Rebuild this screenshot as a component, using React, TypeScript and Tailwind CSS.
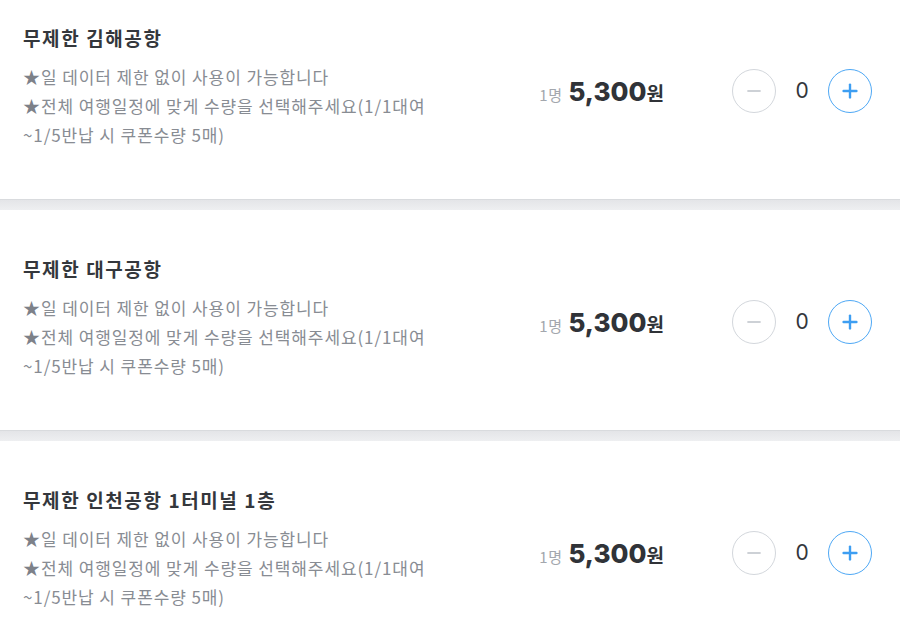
import { Minus, Plus } from "lucide-react";

const items = [
  { name: "무제한 김해공항" },
  { name: "무제한 대구공항" },
  { name: "무제한 인천공항 1터미널 1층" },
];

function Stepper() {
  return (
    <div className="flex items-center">
      <button className="flex h-[44px] w-[44px] items-center justify-center rounded-full border border-[#d3d7dc] bg-white">
        <Minus className="h-[20px] w-[20px] text-[#cdd1d6]" strokeWidth={2.6} />
      </button>
      <span className="w-[52px] text-center text-[21px] text-[#33363b]" style={{ fontFamily: "Inter, sans-serif" }}>
        0
      </span>
      <button className="flex h-[44px] w-[44px] items-center justify-center rounded-full border border-[#4ea8f5] bg-white">
        <Plus className="h-[22px] w-[22px] text-[#3d9ef2]" strokeWidth={2.6} />
      </button>
    </div>
  );
}

function Ticket({ name, first }: { name: string; first?: boolean }) {
  return (
    <section
      className={`flex items-start bg-white pl-[23px] pr-[28px] ${
        first ? "h-[199px] pt-[25px]" : "h-[220px] pt-[46px]"
      }`}
    >
      <div className="flex-1">
        <h3 className="text-[19px] font-semibold leading-[26px] tracking-[1.6px] text-[#34373c]">{name}</h3>
        <p className="mt-[11px] text-[17px] leading-[29px] tracking-[0.9px] text-[#888c93]">
          <span className="text-[#7d8189]">★</span>일 데이터 제한 없이 사용이 가능합니다
          <br />
          <span className="text-[#7d8189]">★</span>전체 여행일정에 맞게 수량을 선택해주세요(1/1대여
          <br />
          ~1/5반납 시 쿠폰수량 5매)
        </p>
      </div>
      <div className="mt-[44px] flex items-center">
        <div className="mr-[68px] flex items-baseline text-[#303338]">
          <span className="mr-[6px] text-[15px] tracking-[0.5px] text-[#a3a7ad]">1명</span>
          <span className="text-[26px] font-extrabold" style={{ fontFamily: "Inter, sans-serif" }}>
            5,300
          </span>
          <span className="text-[19px] font-semibold">원</span>
        </div>
        <Stepper />
      </div>
    </section>
  );
}

export default function App() {
  return (
    <div
      className="h-[644px] w-[900px] overflow-hidden bg-white"
      style={{ fontFamily: '"Noto Sans CJK KR", "Noto Sans", sans-serif' }}
    >
      {items.map((item, i) => (
        <div key={i}>
          {i > 0 && (
            <div className="h-[11px] border-t border-[#d9dbde] bg-gradient-to-b from-[#e4e5e8] to-[#eeeff1]" />
          )}
          <Ticket name={item.name} first={i === 0} />
        </div>
      ))}
    </div>
  );
}
